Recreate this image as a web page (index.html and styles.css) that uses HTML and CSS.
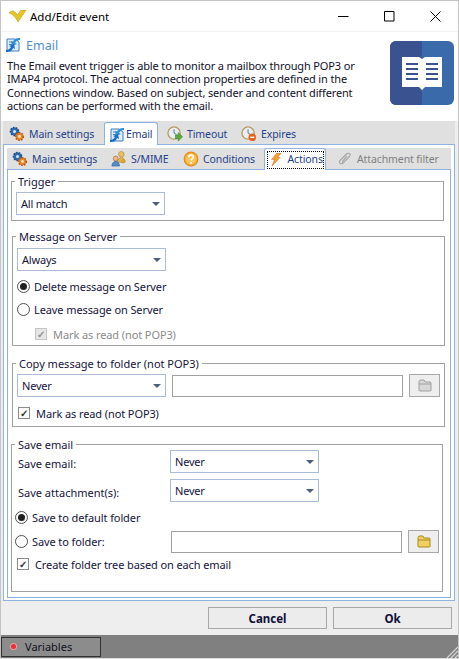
FILE: index.html
```html
<!DOCTYPE html>
<html lang="en">
<head>
    <meta charset="UTF-8">
    <meta name="viewport" content="width=device-width, initial-scale=1.0">
    <title>Add/Edit event</title>
    <link rel="stylesheet" href="styles.css">
</head>
<body>
    <svg class="defs" width="0" height="0">
        <defs>
            <symbol id="gear" viewBox="0 0 16 16">
                <circle cx="5.5" cy="5.5" r="4" fill="#2f6fb5" stroke="#1c4a86" stroke-width="1.6" stroke-dasharray="1.6 1.2"/>
                <circle cx="5.5" cy="5.5" r="1.5" fill="#d8e8f8"/>
                <circle cx="10.5" cy="10.5" r="3.8" fill="#e8862a" stroke="#b85a10" stroke-width="1.6" stroke-dasharray="1.6 1.2"/>
                <circle cx="10.5" cy="10.5" r="1.4" fill="#fbe3b0"/>
            </symbol>
            <symbol id="mail" viewBox="0 0 18 18">
                <path d="M3 3h8l4 3v9H3z" fill="#dcecf8" stroke="#3f7fbf"/>
                <path d="M5 6h5M5 8.5h3" stroke="#3f7fbf" fill="none"/>
                <path d="M16 2c-4 0-6 1-7 4l-2-1 1 5 5-2-2-1c1-2 3-3 5-3z" fill="#2f8fd8"/>
                <path d="M2 16c4 0 6-1 7-4l2 1-1-5-5 2 2 1c-1 2-3 3-5 3z" fill="#1f6fc0"/>
            </symbol>
            <symbol id="clock-go" viewBox="0 0 17 17">
                <circle cx="7.5" cy="7.5" r="6.5" fill="#e9eef2" stroke="#b79a62" stroke-width="1.4"/>
                <path d="M7.5 3.5v4l2.5 1.5" fill="none" stroke="#4a6f96"/>
                <path d="M9 9.5h3V7l4.5 4.5L12 16v-2.5H9z" fill="#5cab3c" stroke="#3d7d26" stroke-width=".6"/>
            </symbol>
            <symbol id="clock-stop" viewBox="0 0 17 17">
                <circle cx="7.5" cy="7.5" r="6.5" fill="#e9eef2" stroke="#b79a62" stroke-width="1.4"/>
                <path d="M7.5 3.5v4l2.5 1.5" fill="none" stroke="#4a6f96"/>
                <circle cx="12" cy="12" r="4" fill="#e2611c"/>
                <path d="M9.8 12h4.4" stroke="#fff" stroke-width="1.4"/>
            </symbol>
            <symbol id="users" viewBox="0 0 17 17">
                <circle cx="11" cy="3.5" r="3" fill="#e8c06a" stroke="#b48a34" stroke-width=".7"/>
                <path d="M7 12c0-3 2-5 4-5s4 2 4 5z" fill="#e3b94f" stroke="#b48a34" stroke-width=".7"/>
                <circle cx="5" cy="8" r="2.6" fill="#eeb98e" stroke="#a8683a" stroke-width=".7"/>
                <path d="M1 16c0-3 2-5 4-5s4 2 4 5z" fill="#4f8fcf" stroke="#2f6199" stroke-width=".7"/>
                <circle cx="13" cy="11" r="1.7" fill="none" stroke="#c8982e" stroke-width="1.2"/>
            </symbol>
            <symbol id="question" viewBox="0 0 16 16">
                <circle cx="8" cy="8" r="6.8" fill="#f7b13c" stroke="#e28a1c" stroke-width="1.2"/>
                <circle cx="8" cy="8" r="5" fill="#fbc65c"/>
                <path d="M5.8 6.2c0-3 4.6-3 4.6-.2 0 1.8-2.4 1.8-2.4 3.6" fill="none" stroke="#fff" stroke-width="1.5"/>
                <circle cx="8" cy="12" r="1" fill="#fff"/>
            </symbol>
            <symbol id="bolt" viewBox="0 0 10 13">
                <path d="M6 0h4L6.500 4.500H9L1 13l2.500-6.500H.5z" fill="#f0a030" stroke="#d0641c" stroke-width=".5"/>
            </symbol>
            <symbol id="clip" viewBox="0 0 14 14">
                <path d="M12 4 5 11c-1 1-3.200 1-3.500-.5C1.200 9.500 1.500 9 2.500 8l6-6c1-1 3-1 3.500.5.300 1 0 1.500-1 2.500l-5 5c-1 .8-2 0-1.200-1L9 4" fill="none" stroke="#a8a8a8" stroke-width="1.200"/>
            </symbol>
            <symbol id="folder" viewBox="0 0 14 13">
                <path d="M1 11V2.500L2 1h4l1 2h5.500l.5 1v7.500l-.5.500H1.500z" fill="currentColor" stroke="var(--edge)"/>
                <path d="M1 5h12" stroke="var(--edge)" fill="none"/>
            </symbol>
        </defs>
    </svg>

    <div class="window">
        <div class="titlebar">
            <svg class="app-logo" viewBox="0 0 17 12" width="17" height="12">
                <path d="M0 3c1-2 4-3 6-1l2.500 3L12 0h5l-6 9-2 3C7 8 4 4 0 3z" fill="#e8c520" stroke="#a89016" stroke-width=".5"/>
            </svg>
            <span class="title-text">Add/Edit event</span>
            <div class="win-btns">
                <svg width="11" height="11" viewBox="0 0 11 11"><path d="M0 5.500h10.500" stroke="#000" fill="none"/></svg>
                <svg width="11" height="11" viewBox="0 0 11 11"><path d="M.5 .5h9.500v9.500H.5z" stroke="#000" fill="none"/></svg>
                <svg width="11" height="11" viewBox="0 0 11 11"><path d="M.5 .5l10 10M10.500 .5l-10 10" stroke="#000" fill="none"/></svg>
            </div>
        </div>

        <div class="header">
            <div class="header-text">
                <div class="header-title">
                    <svg class="ico18"><use href="#mail"/></svg>
                    <span>Email</span>
                </div>
                <p class="desc">The Email event trigger is able to monitor a mailbox through POP3 or IMAP4 protocol. The actual connection properties are defined in the Connections window. Based on subject, sender and content different actions can be performed with the email.</p>
            </div>
            <svg class="book" viewBox="0 0 64 64" width="64" height="64">
                <rect width="64" height="64" rx="6" fill="#3a6aa9"/>
                <path d="M6 0h26v64H6a6 6 0 0 1-6-6V6a6 6 0 0 1 6-6z" fill="#3a5390"/>
                <path d="M12 16h17l3 2 3-2h17v30H35l-3 3-3-3H12z" fill="#fff"/>
                <path d="M16 23h12M16 28h12M16 33h12M16 38h12M36 23h12M36 28h12M36 33h12M36 38h12" stroke="#3a5390" stroke-width="2"/>
            </svg>
        </div>

        <div class="main">
            <div class="tabs outer-tabs">
                <div class="tab t-main"><svg class="ico16"><use href="#gear"/></svg>Main settings</div>
                <div class="tab active t-email"><svg class="ico18"><use href="#mail"/></svg>Email</div>
                <div class="tab t-timeout"><svg class="ico16"><use href="#clock-go"/></svg>Timeout</div>
                <div class="tab t-expires"><svg class="ico16"><use href="#clock-stop"/></svg>Expires</div>
            </div>
            <div class="pane outer-pane">
                <div class="tabs inner-tabs">
                    <div class="tab i-main"><svg class="ico16"><use href="#gear"/></svg>Main settings</div>
                    <div class="tab i-smime"><svg class="ico16"><use href="#users"/></svg>S/MIME</div>
                    <div class="tab i-cond"><svg class="ico16"><use href="#question"/></svg>Conditions</div>
                    <div class="tab active i-actions"><span class="focus"><svg class="bolt"><use href="#bolt"/></svg>Actions</span></div>
                    <div class="tab disabled i-attach"><svg class="clip"><use href="#clip"/></svg>Attachment filter</div>
                </div>
                <div class="pane inner-pane">
                    <fieldset class="group g-trigger">
                        <legend>Trigger</legend>
                        <div class="combo">All match</div>
                    </fieldset>

                    <fieldset class="group g-message">
                        <legend>Message on Server</legend>
                        <div class="combo">Always</div>
                        <label class="opt r1"><span class="radio on"></span>Delete message on Server</label>
                        <label class="opt r2"><span class="radio"></span>Leave message on Server</label>
                        <label class="opt sub muted"><span class="check off">&#10003;</span>Mark as read (not POP3)</label>
                    </fieldset>

                    <fieldset class="group g-copy">
                        <legend>Copy message to folder (not POP3)</legend>
                        <div class="row">
                            <div class="combo">Never</div>
                            <div class="field"></div>
                            <div class="browse off"><svg class="folder"><use href="#folder"/></svg></div>
                        </div>
                        <label class="opt c1"><span class="check">&#10003;</span>Mark as read (not POP3)</label>
                    </fieldset>

                    <fieldset class="group g-save">
                        <legend>Save email</legend>
                        <div class="form-row s1"><span class="lbl">Save email:</span><div class="combo">Never</div></div>
                        <div class="form-row s2"><span class="lbl">Save attachment(s):</span><div class="combo">Never</div></div>
                        <label class="opt r3"><span class="radio on"></span>Save to default folder</label>
                        <div class="row r4">
                            <label class="opt"><span class="radio"></span>Save to folder:</label>
                            <div class="field"></div>
                            <div class="browse"><svg class="folder"><use href="#folder"/></svg></div>
                        </div>
                        <label class="opt c2"><span class="check">&#10003;</span>Create folder tree based on each email</label>
                    </fieldset>
                </div>
            </div>
            <div class="actions">
                <button class="btn btn-cancel">Cancel</button>
                <button class="btn btn-ok">Ok</button>
            </div>
        </div>

        <div class="statusbar">
            <div class="var-btn"><span class="dot"></span>Variables</div>
            <svg class="grip" width="12" height="12" viewBox="0 0 12 12"><path d="M12 1 1 12M12 5 5 12M12 9 9 12" stroke="#d8d8d8" stroke-width="1.200" fill="none"/></svg>
        </div>
    </div>
</body>
</html>
```

FILE: styles.css
```css
* {
    box-sizing: border-box;
}

body {
    margin: 0;
    font-family: "Noto Sans", "Open Sans", sans-serif;
    font-size: 11px;
    line-height: 13px;
    color: #14143c;
    background-color: #fff;
    overflow: hidden;
}

.defs {
    position: absolute;
}

.window {
    width: 459px;
    height: 659px;
    display: flex;
    flex-direction: column;
    border: 1px solid #c4c4c4;
    border-bottom-color: #e0e0e0;
    background-color: #fff;
}

/* title bar */
.titlebar {
    height: 31px;
    flex: none;
    display: flex;
    align-items: center;
    padding-left: 8px;
    border-bottom: 1px solid #f1f1f1;
}

.app-logo {
    margin-right: 4px;
}

.title-text {
    font-size: 11.5px;
    color: #000;
}

.win-btns {
    margin-left: auto;
    display: flex;
    gap: 35px;
    padding-right: 17px;
}

/* header */
.header {
    height: 89px;
    flex: none;
    display: flex;
    padding: 9px 4px 0 3px;
    justify-content: space-between;
}

.header-text {
    width: 370px;
}

.header-title {
    display: flex;
    align-items: center;
    gap: 4px;
    height: 18px;
    font-size: 12.5px;
    color: #4f8fcf;
    margin-top: -5px;
}

.desc {
    margin: 5px 0 0 3px;
    width: 360px;
    line-height: 13.4px;
    letter-spacing: -.14px;
    color: #10102a;
}

.ico16 {
    width: 16px;
    height: 16px;
    margin-right: 4px;
    flex: none;
}

.ico18 {
    width: 18px;
    height: 18px;
    flex: none;
}

/* tabs */
.main {
    flex: 1;
    background-color: #eeeeee;
    display: flex;
    flex-direction: column;
    padding: 0 3px 0 2px;
}

.tabs {
    display: flex;
    background-color: #e0e0e0;
    color: #23418a;
    font-size: 10.5px;
    letter-spacing: -.1px;
}

.tab {
    display: flex;
    align-items: center;
    white-space: nowrap;
    border: 1px solid transparent;
    border-bottom: none;
}

.tab.active {
    background-color: #fff;
    border-color: #8db2e3;
    border-radius: 3px 3px 0 0;
    position: relative;
    z-index: 1;
}

.tab.disabled {
    color: #808080;
}

.outer-tabs {
    height: 23px;
}

.outer-tabs .tab {
    height: 22px;
    margin-top: 1px;
    padding-top: 1px;
}

.outer-tabs .tab.active {
    height: 23px;
}

.t-main { margin-left: 5px; width: 96px; }
.t-email { width: 54px; padding-left: 3px; }
.t-timeout { margin-left: 8px; width: 74px; }
.t-expires { width: 60px; }

.pane {
    background-color: #fff;
    border: 1px solid #8db2e3;
}

.outer-pane {
    flex: none;
    height: 457px;
    padding: 3px;
    width: 452px;
}

.inner-tabs {
    height: 21px;
}

.inner-tabs .tab {
    height: 21px;
}

.inner-tabs .tab.active {
    height: 22px;
}

.i-main { margin-left: 4px; width: 99px; }
.i-smime { width: 72px; }
.i-cond { width: 82px; }
.i-actions { width: 62px; justify-content: center; }
.i-attach { margin-left: 11px; }

.focus {
    display: flex;
    align-items: center;
    height: 18px;
    width: 57px;
    padding-left: 3px;
    border: 1px dotted #000;
}

.bolt {
    width: 10px;
    height: 13px;
    margin-right: 7px;
    flex: none;
}

.clip {
    width: 14px;
    height: 14px;
    margin-right: 5px;
    flex: none;
}

.inner-pane {
    height: 429px;
    padding: 5px 0 0 3px;
}

/* group boxes */
.group {
    margin: 0;
    padding: 0;
    border: 1px solid #a0a0a0;
    border-radius: 0;
    position: relative;
    width: 433px;
    min-width: 0;
}

legend {
    padding: 0 3px;
    margin-left: -1px;
    color: #14143c;
    line-height: 13px;
}

.g-trigger {
    height: 46px;
    padding: 4px 0 0 4px;
}

.g-message {
    height: 116px;
    margin-top: 9px;
    margin-left: 1px;
    padding: 5px 0 0 4px;
}

.g-copy {
    height: 70px;
    margin-top: 11px;
    margin-left: 1px;
    padding: 4px 0 0 4px;
}

.g-save {
    height: 154px;
    margin-top: 11px;
    width: 432px;
    padding: 0 0 0 4px;
}

.g-save legend {
    margin-bottom: -1px;
}

.combo {
    width: 149px;
    height: 23px;
    flex: none;
    border: 1px solid #a9bbd6;
    background-color: #fff;
    padding-left: 4px;
    display: flex;
    align-items: center;
    position: relative;
    letter-spacing: -.2px;
}

.combo::after {
    content: "";
    position: absolute;
    right: 4px;
    top: 9px;
    border-left: 4px solid transparent;
    border-right: 4px solid transparent;
    border-top: 4px solid #4a5f80;
}

.row {
    display: flex;
    align-items: center;
}

.field {
    width: 231px;
    height: 22px;
    margin-left: 6px;
    border: 1px solid #a0a0a0;
    flex: none;
}

.browse {
    width: 31px;
    height: 23px;
    margin-left: 6px;
    border: 1px solid #a8a8a8;
    background-color: #eeeeee;
    display: flex;
    align-items: center;
    justify-content: center;
    flex: none;
    color: #f2d060;
    --edge: #a88a20;
}

.browse.off {
    color: #d8d8d8;
    --edge: #a0a0a0;
}

.folder {
    width: 14px;
    height: 13px;
}

/* radios and checks */
.opt {
    display: flex;
    align-items: center;
    height: 14px;
    letter-spacing: -.1px;
}

.radio {
    width: 13px;
    height: 13px;
    border: 1px solid #505050;
    border-radius: 50%;
    background-color: #fff;
    margin-right: 4px;
    flex: none;
    position: relative;
}

.radio.on::after {
    content: "";
    position: absolute;
    left: 2px;
    top: 2px;
    width: 7px;
    height: 7px;
    border-radius: 50%;
    background-color: #222;
}

.check {
    width: 12px;
    height: 12px;
    border: 1px solid #8a8a8a;
    background-color: #fff;
    margin-right: 6px;
    flex: none;
    font-size: 10px;
    font-weight: bold;
    line-height: 10px;
    text-align: center;
    color: #333;
}

.check.off {
    background-color: #e6e6e6;
    border-color: #c4c4c4;
    color: #909090;
}

.r1 { margin-top: 8px; }
.r2 { margin-top: 9px; }
.sub { margin: 11px 0 0 18px; }
.muted { color: #8a8a8a; }
.c1 { margin: 9px 0 0 1px; }

.form-row {
    display: flex;
    align-items: center;
    height: 23px;
}

.lbl {
    width: 154px;
    padding: 3px 0 0 2px;
}

.s2 { margin-top: 6px; }
.r3 { margin-top: 8px; margin-left: -1px; }
.r4 { margin-top: 6px; margin-left: -1px; }
.r4 .opt { width: 153px; flex: none; }
.r4 .field { margin-left: 3px; }
.c2 { margin: 4px 0 0 1px; }

/* bottom buttons */
.actions {
    display: flex;
    justify-content: flex-end;
    gap: 6px;
    margin-top: 6px;
    padding-right: 3px;
}

.btn {
    height: 22px;
    width: 119px;
    border: 1px solid #a8a8a8;
    background-color: #ececec;
    font-family: inherit;
    font-size: 11.5px;
    font-weight: bold;
    color: #10103a;
    padding: 0;
}

/* status bar */
.statusbar {
    height: 23px;
    flex: none;
    background-color: #808080;
    display: flex;
    align-items: center;
    justify-content: space-between;
}

.var-btn {
    width: 100px;
    height: 20px;
    border: 1px solid #303030;
    background-color: #8c8c8c;
    color: #101020;
    display: flex;
    align-items: center;
    padding-left: 9px;
}

.dot {
    width: 5px;
    height: 5px;
    border-radius: 50%;
    background-color: #e8303a;
    box-shadow: 0 0 0 1px #e8a0a0;
    margin-right: 9px;
}

.grip {
    align-self: flex-end;
}
```
